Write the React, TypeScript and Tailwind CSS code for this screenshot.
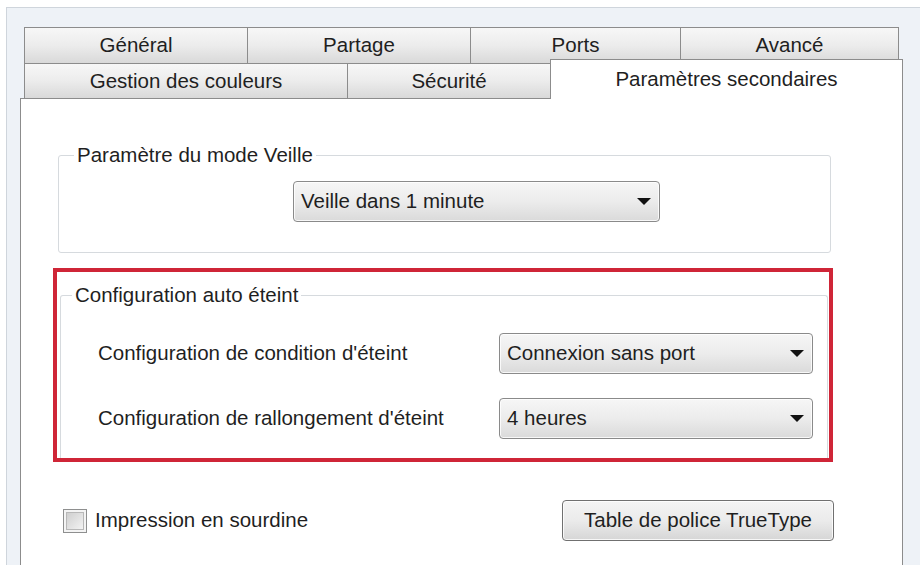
import React from "react";

const font = { fontFamily: '"Liberation Sans", Arial, sans-serif' };

function Arrow() {
    return (
        <svg width="14" height="7" viewBox="0 0 14 7" className="shrink-0">
            <path d="M0 0H14L7 7Z" fill="#111" />
        </svg>
    );
}

function Select({ value, className }: { value: string; className: string }) {
    return (
        <div
            className={
                "flex items-center justify-between rounded-[4px] border border-[#8a8a8a] bg-gradient-to-b from-[#f6f6f6] via-[#ececec] to-[#dadada] pl-[7px] pr-[8px] shadow-[inset_0_0_0_1px_rgba(255,255,255,0.8)] " +
                className
            }
        >
            <span className="leading-none">{value}</span>
            <Arrow />
        </div>
    );
}

function Tab({ label, className }: { label: string; className: string }) {
    return (
        <div
            className={
                "flex items-center justify-center border-t border-r border-[#8c8c8c] bg-gradient-to-b from-[#f7f7f7] via-[#ececec] to-[#d9d9d9] " +
                className
            }
        >
            {label}
        </div>
    );
}

export default function App() {
    return (
        <div className="w-[920px] h-[565px] overflow-hidden bg-white pt-[7px] pl-[6px] text-[20.5px] text-[#1f1f1f]" style={font}>
            <div className="h-[600px] border-l border-t border-[#cfd5dc] bg-[#eef2f7] pl-[13px] pt-[19px]">
                {/* tabs */}
                <div className="pl-[4px]">
                    <div className="flex h-[36px]">
                        <Tab label="Général" className="w-[224px] border-l" />
                        <Tab label="Partage" className="w-[223px]" />
                        <Tab label="Ports" className="w-[210px]" />
                        <Tab label="Avancé" className="w-[218px]" />
                    </div>
                    <div className="flex h-[35px] items-end">
                        <Tab label="Gestion des couleurs" className="h-[35px] w-[324px] border-l" />
                        <div className="flex h-[35px] w-[202px] items-center justify-center border-t border-[#8c8c8c] bg-gradient-to-b from-[#f7f7f7] via-[#ececec] to-[#d9d9d9]">
                            Sécurité
                        </div>
                        <div className="relative z-10 -mb-px flex h-[40px] w-[353px] items-center justify-center border-x border-t border-[#8c8c8c] bg-white">
                            Paramètres secondaires
                        </div>
                    </div>
                </div>

                {/* panel */}
                <div className="h-[480px] w-[883px] border border-[#8c8c8c] bg-white">
                    <fieldset className="ml-[37px] mt-[44px] w-[773px] rounded-[3px] border border-[#d6dade] pb-[30px]">
                        <legend className="ml-[15px] px-[3px] leading-[24px]">Paramètre du mode Veille</legend>
                        <Select value="Veille dans 1 minute" className="ml-[234px] mt-[14px] h-[41px] w-[367px]" />
                    </fieldset>

                    <div className="ml-[32px] mt-[15px] h-[194px] w-[780px] border-[4px] border-[#cf2537]">
                        <fieldset className="ml-[3px] mt-[11px] h-[175px] w-[768px] rounded-t-[3px] border border-b-0 border-[#d6dade]">
                            <legend className="ml-[11px] px-[3px] leading-[24px]">Configuration auto éteint</legend>
                            <div className="mt-[26px] flex flex-col gap-[24px] pl-[37px] pr-[14px]">
                                <div className="flex items-center justify-between">
                                    <span>Configuration de condition d'éteint</span>
                                    <Select value="Connexion sans port" className="h-[41px] w-[314px]" />
                                </div>
                                <div className="flex items-center justify-between">
                                    <span>Configuration de rallongement d'éteint</span>
                                    <Select value="4 heures" className="h-[41px] w-[314px]" />
                                </div>
                            </div>
                        </fieldset>
                    </div>

                    <div className="ml-[42px] mt-[38px] flex w-[771px] items-center justify-between">
                        <label className="flex items-center gap-[8px]">
                            <span className="flex h-[24px] w-[24px] items-center justify-center border border-[#8e8f8f] bg-[#f4f4f4]">
                                <span className="h-[18px] w-[18px] border border-[#b8b8b8] bg-gradient-to-br from-[#cfcfcf] to-[#f3f3f3]" />
                            </span>
                            <span>Impression en sourdine</span>
                        </label>
                        <button className="h-[41px] w-[272px] rounded-[4px] border border-[#707070] bg-gradient-to-b from-[#f4f4f4] via-[#ebebeb] to-[#d6d6d6] shadow-[inset_0_0_0_1px_rgba(255,255,255,0.8)]">
                            Table de police TrueType
                        </button>
                    </div>
                </div>
            </div>
        </div>
    );
}
